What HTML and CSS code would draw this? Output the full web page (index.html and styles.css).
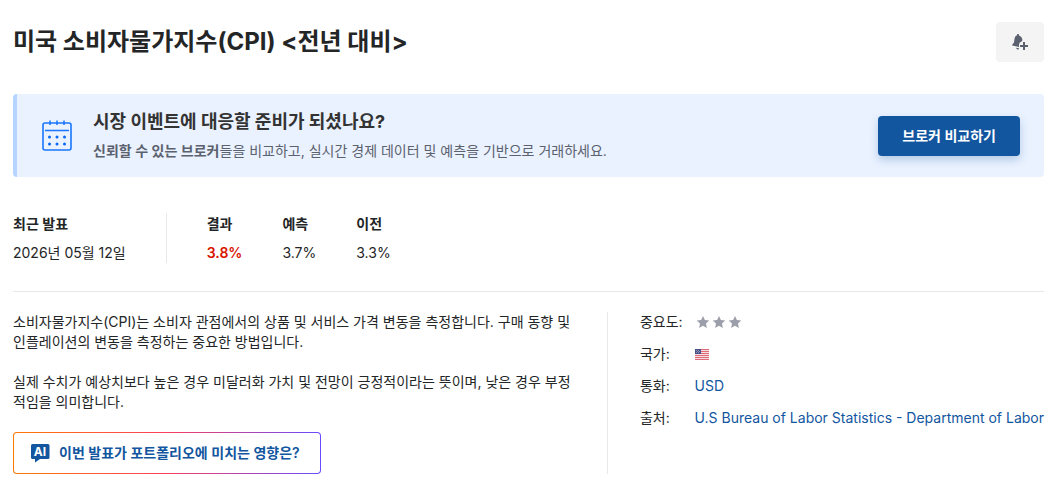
FILE: index.html
```
<!DOCTYPE html>
<html lang="ko">
<head>
  <meta charset="UTF-8" />
  <meta name="viewport" content="width=device-width, initial-scale=1.0"/>
  <title>미국 소비자물가지수(CPI)</title>
  <link rel="stylesheet" href="styles.css">
</head>
<body>
  <main class="page">
    <header class="page-header">
      <h1>미국 소비자물가지수(CPI) &lt;전년 대비&gt;</h1>
      <button class="alert-btn" type="button" aria-label="알림 추가">
        <svg width="18" height="18" viewBox="0 0 18 18">
          <path d="M7 1c.8 0 1.200.6 1 1.500 2.200.7 3.500 2.500 3.300 4.800L11 8.300 8.800 9.600 8 11.500V14L1.200 12.500l.2-1.300 1.500-1.500.6-3.700C3.800 4 4.700 2.700 6 2.300 6 1.500 6.300 1 7 1z" fill="#5b616e"/>
          <path d="M5.300 14.800l2.900.5c-.3.900-.9 1.400-1.600 1.300-.8-.1-1.300-.8-1.300-1.800z" fill="#5b616e"/>
          <path d="M13 9v8M9 13h8" stroke="#5b616e" stroke-width="2" fill="none"/>
        </svg>
      </button>
    </header>

    <section class="banner">
      <svg class="banner-icon" width="32" height="32" viewBox="0 0 32 32" fill="none" stroke="#1a75ff">
        <rect x="2" y="3" width="28" height="27" rx="2" stroke-width="1.600"/>
        <path d="M4 10.500h24M9 .5v4.500M16 .5v4.500M23 .5v4.500" stroke-width="1.500"/>
        <path d="M8.500 17h.01M16 17h.01M23.500 17h.01M8.500 24h.01M16 24h.01M23.500 24h.01" stroke="#0a69f5" stroke-width="3" stroke-linecap="round"/>
      </svg>
      <div class="banner-text">
        <h2>시장 이벤트에 대응할 준비가 되셨나요?</h2>
        <p><strong>신뢰할 수 있는 브로커</strong>들을 비교하고, 실시간 경제 데이터 및 예측을 기반으로 거래하세요.</p>
      </div>
      <button class="banner-btn" type="button">브로커 비교하기</button>
    </section>

    <section class="release">
      <dl class="release-date">
        <div>
          <dt>최근 발표</dt>
          <dd>2026년 05월 12일</dd>
        </div>
      </dl>
      <dl class="release-values">
        <div>
          <dt>결과</dt>
          <dd class="worse">3.8%</dd>
        </div>
        <div>
          <dt>예측</dt>
          <dd>3.7%</dd>
        </div>
        <div>
          <dt>이전</dt>
          <dd>3.3%</dd>
        </div>
      </dl>
    </section>

    <section class="details">
      <div class="overview">
        <p>소비자물가지수(CPI)는 소비자 관점에서의 상품 및 서비스 가격 변동을 측정합니다. 구매 동향 및 인플레이션의 변동을 측정하는 중요한 방법입니다.</p>
        <p>실제 수치가 예상치보다 높은 경우 미달러화 가치 및 전망이 긍정적이라는 뜻이며, 낮은 경우 부정적임을 의미합니다.</p>
        <button class="ai-btn" type="button">
          <svg width="20" height="20" viewBox="0 0 20 20">
            <path d="M2.500 1h15.500A1.500 1.500 0 0 1 19.500 2.500v12a1.500 1.500 0 0 1-1.500 1.500H10l-5 3.500V16H2.500A1.500 1.500 0 0 1 1 14.500v-12A1.500 1.500 0 0 1 2.500 1z" fill="#1256a0"/>
            <text class="ai-label" x="10" y="13" text-anchor="middle">AI</text>
          </svg>
          이번 발표가 포트폴리오에 미치는 영향은?
        </button>
      </div>

      <dl class="facts">
        <dt>중요도:</dt>
        <dd>
          <svg class="stars" width="48" height="16" viewBox="0 0 48 16" fill="#9c9fa9" role="img" aria-label="중요도">
            <path id="star" d="M8 2l1.900 4.100 4.400.5-3.300 3 .9 4.400L8 11.800 4.100 14l.9-4.400-3.300-3 4.400-.5z"/>
            <use href="#star" x="16"/>
            <use href="#star" x="32"/>
          </svg>
        </dd>
        <dt>국가:</dt>
        <dd>
          <svg class="flag" width="14" height="11" viewBox="0 0 14 11" role="img" aria-label="미국">
            <path d="M0 0h14v11H0z" fill="#f3dde0"/>
            <path d="M0 .5h14M0 2.500h14M0 4.500h14M0 6.500h14M0 8.500h14M0 10.500h14" stroke="#df6b79"/>
            <path d="M0 0h6v5H0z" fill="#494f87"/>
            <path d="M1 1.500h1M3 1.500h1M2 2.500h1M4 2.500h1M1 3.500h1M3 3.500h1" stroke="#8e92b6"/>
          </svg>
        </dd>
        <dt>통화:</dt>
        <dd><a href="#">USD</a></dd>
        <dt>출처:</dt>
        <dd><a href="#">U.S Bureau of Labor Statistics - Department of Labor</a></dd>
      </dl>
    </section>
  </main>
</body>
</html>
```
FILE: styles.css
```
* {
  box-sizing: border-box;
}
body {
  margin: 0;
  background-color: #fff;
  color: #232526;
  font-family: Inter, "Noto Sans CJK KR", sans-serif;
  font-size: 14px;
  line-height: 20px;
}
h1, h2, p, dl, dd {
  margin: 0;
}
button {
  font-family: inherit;
  font-size: 14px;
  line-height: 20px;
  font-weight: 600;
  cursor: pointer;
}
a {
  color: #1256a0;
  text-decoration: none;
}
.page {
  padding: 22px 20px 14px 13px;
}
.page-header {
  display: flex;
  justify-content: space-between;
  align-items: center;
}
h1 {
  font-size: 24px;
  line-height: 40px;
  font-weight: 700;
}
.alert-btn {
  display: flex;
  align-items: center;
  justify-content: center;
  width: 48px;
  height: 40px;
  padding: 0;
  border: none;
  border-radius: 4px;
  background-color: #f4f4f4;
}
.banner {
  display: flex;
  align-items: center;
  gap: 20px;
  margin-top: 32px;
  padding: 14px 24px;
  border-left: 4px solid #b5d4ff;
  border-radius: 4px;
  background-color: #eaf2ff;
}
.banner-icon {
  flex: none;
}
.banner-text {
  flex: 1;
}
h2 {
  font-size: 18px;
  line-height: 27px;
  font-weight: 700;
  color: #333;
}
.banner-text p {
  margin-top: 4px;
  line-height: 24px;
  color: #5b616e;
}
.banner-text strong {
  font-weight: 600;
}
.banner-btn {
  padding: 10px 24px;
  border: none;
  border-radius: 4px;
  background-color: #1256a0;
  color: #fff;
  box-shadow: 0 4px 8px rgba(18, 86, 160, 0.25);
}
.release {
  display: flex;
  padding: 36px 0 28px;
  border-bottom: 1px solid #e6e9eb;
}
.release dt {
  line-height: 22px;
  font-weight: 600;
}
.release dd {
  margin-top: 8px;
}
.release-date {
  padding-right: 40px;
  border-right: 1px solid #e6e9eb;
}
.release-values {
  display: flex;
  gap: 40px;
  padding-left: 40px;
}
.release .worse {
  color: #d91400;
  font-weight: 600;
}
.details {
  display: flex;
  padding-top: 20px;
}
.overview {
  flex: 1;
  padding-right: 32px;
  border-right: 1px solid #e6e9eb;
}
.overview p {
  margin-bottom: 20px;
}
.ai-btn {
  display: inline-flex;
  align-items: center;
  gap: 9px;
  padding: 10px 20px 10px 16px;
  border: 1px solid transparent;
  border-radius: 4px;
  background: linear-gradient(#fff, #fff) padding-box,
    linear-gradient(90deg, #ff7901, #f93f5e 50%, #674bff) border-box;
  color: #1256a0;
}
.ai-label {
  font-size: 12px;
  font-weight: 700;
  fill: #fff;
}
.facts {
  display: grid;
  grid-template-columns: auto auto;
  align-content: start;
  column-gap: 12px;
  row-gap: 12px;
  padding-left: 32px;
}
.facts dd {
  display: flex;
  align-items: center;
}
```
